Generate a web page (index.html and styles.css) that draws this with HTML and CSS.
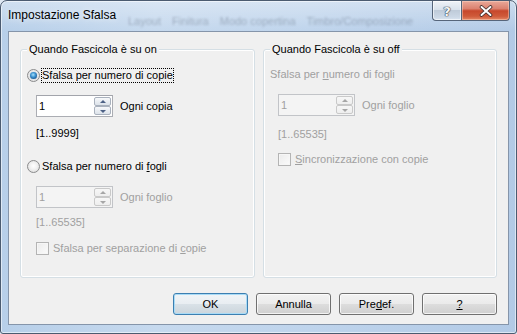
FILE: index.html
```html
<!DOCTYPE html>
<html lang="it">
<head>
<meta charset="utf-8">
<title>Impostazione Sfalsa</title>
<link rel="stylesheet" href="styles.css">
</head>
<body>
<div class="window">
  <div class="titlebar">
    <span class="title">Impostazione Sfalsa</span>
    <div class="ghost"><span>Layout</span><span>Finitura</span><span>Modo copertina</span><span>Timbro/Composizione</span></div>
    <div class="caption">
      <div class="cap help">?</div>
      <div class="cap close">
        <svg width="14" height="12" viewBox="0 0 14 12">
          <path d="M2.5 2 L11.5 10 M11.5 2 L2.5 10" stroke="#3a2a2a" stroke-width="3.6" stroke-linecap="round"/>
          <path d="M2.5 2 L11.5 10 M11.5 2 L2.5 10" stroke="#ffffff" stroke-width="2" stroke-linecap="round"/>
        </svg>
      </div>
    </div>
  </div>
  <div class="client">
    <div class="groups">
      <div class="group g-left">
        <span class="legend">Quando Fascicola è su on</span>
        <div class="opt opt-first">
          <span class="radio on"></span><span class="lbl focus">Sfalsa per numero di copie</span>
        </div>
        <div class="spinrow r1">
          <div class="spin"><span class="val">1</span><div class="arrows"><span class="arr up"></span><span class="arr down"></span></div></div>
          <span class="cap-txt">Ogni copia</span>
        </div>
        <div class="range r1b">[1..9999]</div>
        <div class="opt opt-second">
          <span class="radio"></span><span class="lbl">Sfalsa per numero di <u>f</u>ogli</span>
        </div>
        <div class="spinrow r2 dis">
          <div class="spin"><span class="val">1</span><div class="arrows"><span class="arr up"></span><span class="arr down"></span></div></div>
          <span class="cap-txt">Ogni foglio</span>
        </div>
        <div class="range r2b dis">[1..65535]</div>
        <div class="chk-row c1 dis">
          <span class="check"></span><span class="lbl">Sfalsa per separazione di <u>c</u>opie</span>
        </div>
      </div>
      <div class="group g-right">
        <span class="legend">Quando Fascicola è su off</span>
        <div class="plain dis">Sfalsa per <u>n</u>umero di fogli</div>
        <div class="spinrow r3 dis">
          <div class="spin"><span class="val">1</span><div class="arrows"><span class="arr up"></span><span class="arr down"></span></div></div>
          <span class="cap-txt">Ogni foglio</span>
        </div>
        <div class="range r3b dis">[1..65535]</div>
        <div class="chk-row c2 dis">
          <span class="check"></span><span class="lbl"><u>S</u>incronizzazione con copie</span>
        </div>
      </div>
    </div>
    <div class="buttons">
      <button class="btn default">OK</button>
      <button class="btn">Annulla</button>
      <button class="btn">Pre<u>d</u>ef.</button>
      <button class="btn"><u>?</u></button>
    </div>
  </div>
</div>
</body>
</html>
```

FILE: styles.css
```css
* { box-sizing: border-box; }
html, body { margin: 0; padding: 0; }
body {
  width: 517px;
  height: 334px;
  overflow: hidden;
  background: #dfe8f3;
  font-family: "Liberation Sans", Arial, sans-serif;
  font-size: 11px;
  color: #000;
}
.window {
  width: 517px;
  height: 334px;
  border: 1px solid #4b5b70;
  border-radius: 7px 7px 3px 3px;
  background:
    linear-gradient(180deg, rgba(255,255,255,0.35) 0%, rgba(255,255,255,0) 30px),
    linear-gradient(90deg, #b7cfe9 0%, #c6d9ee 30%, #bfd4ec 60%, #b2cae6 100%);
  display: flex;
  flex-direction: column;
  box-shadow: inset 0 0 0 1px rgba(255,255,255,0.55);
}
.titlebar {
  height: 30px;
  position: relative;
  display: flex;
  align-items: flex-start;
  padding-left: 7px;
}
.title {
  font-size: 12px;
  line-height: 15px;
  padding-top: 7px;
  color: #000;
  position: relative;
  z-index: 1;
  text-shadow: 0 0 6px rgba(255,255,255,0.9);
}
.ghost {
  position: absolute;
  left: 127px;
  top: 14px;
  display: flex;
  gap: 11px;
  font-size: 11px;
  color: rgba(40,50,70,0.28);
  filter: blur(1.2px);
  white-space: nowrap;
}
.caption {
  margin-left: auto;
  margin-right: 6px;
  display: flex;
  position: relative;
  z-index: 2;
}
.cap {
  height: 20px;
  border: 1px solid #56657a;
  border-top: none;
  display: flex;
  align-items: center;
  justify-content: center;
}
.help {
  width: 29px;
  border-right: none;
  border-radius: 0 0 0 4px;
  background: linear-gradient(180deg, #eef2f7 0%, #d9e2ec 45%, #bfcbd9 50%, #ccd8e6 85%, #dce6f1 100%);
  box-shadow: inset 0 0 0 1px rgba(255,255,255,0.6);
  font-family: "DejaVu Sans", sans-serif;
  font-weight: bold;
  font-size: 13px;
  color: #f4f6f8;
  text-shadow: 0 0 1px #2d3a4a, 0 0 1px #2d3a4a, 0 0 1px #2d3a4a;
  padding-top: 1px;
}
.close {
  width: 49px;
  border-radius: 0 0 4px 0;
  background: linear-gradient(180deg, #eaa99a 0%, #dc8270 40%, #c7482c 52%, #cf5a3a 80%, #e48766 100%);
  box-shadow: inset 0 0 0 1px rgba(255,220,200,0.45);
}
.client {
  flex: 1;
  margin: 0 7px 8px 7px;
  background: #f0f0f0;
  border: 1px solid #8595aa;
  display: flex;
  flex-direction: column;
}
.groups {
  display: flex;
  gap: 8px;
  padding: 17px 11px 0 11px;
}
.group {
  position: relative;
  height: 229px;
  border: 1px solid #d5dfe5;
  border-radius: 3px;
  box-shadow: inset 0 0 0 1px #fff;
  display: flex;
  flex-direction: column;
  align-items: flex-start;
  padding-left: 6px;
}
.g-left { width: 235px; }
.g-right { width: 234px; }
.legend {
  position: absolute;
  top: -7px;
  left: 6px;
  padding: 0 2px;
  line-height: 13px;
  background: #f0f0f0;
  color: #000;
}
.dis, .dis .lbl, .dis .cap-txt { color: #a0a0a0; }
.opt {
  display: flex;
  align-items: center;
  height: 15px;
}
.opt-first { margin-top: 18px; }
.opt-second { margin-top: 19px; }
.radio {
  width: 13px;
  height: 13px;
  border-radius: 50%;
  border: 1px solid #8a8b8c;
  background: radial-gradient(circle at 50% 45%, #ffffff 0%, #f2f2f2 40%, #d6d6d6 100%);
  position: relative;
  flex: none;
}
.radio.on::after {
  content: "";
  position: absolute;
  left: 2px;
  top: 2px;
  width: 7px;
  height: 7px;
  border-radius: 50%;
  background: radial-gradient(circle at 45% 40%, #a9e1fb 0%, #3f95d2 40%, #1a5b97 75%, #113f6d 100%);
  box-shadow: 0 0 1px rgba(30,90,150,0.6);
}
.lbl {
  line-height: 13px;
  border: 1px solid transparent;
  margin-left: 1px;
}
.lbl.focus { border: 1px dotted #000; }
.spinrow {
  display: flex;
  align-items: center;
  margin-left: 9px;
  gap: 7px;
}
.r1, .r2 { margin-top: 12px; }
.r3 { margin-top: 13px; margin-left: 8px; }
.spin {
  width: 77px;
  height: 22px;
  border: 1px solid #abadb3;
  border-top-color: #a2a4ab;
  background: #fff;
  padding: 1px;
  display: flex;
}
.dis .spin {
  border-color: #c2c4c8;
  background: #f4f4f4;
}
.val {
  flex: 1;
  line-height: 18px;
  padding-left: 1px;
  color: #000;
}
.dis .val { color: #a0a0a0; }
.arrows {
  width: 17px;
  display: flex;
  flex-direction: column;
}
.arr {
  flex: 1;
  border: 1px solid #a9b1bd;
  border-radius: 2px;
  background: linear-gradient(180deg, #f8f9fb 0%, #e9edf2 50%, #dde3ea 100%);
  position: relative;
}
.dis .arr {
  border-color: #c9c9c9;
  background: linear-gradient(180deg, #f7f7f7 0%, #eeeeee 100%);
}
.arr::after {
  content: "";
  position: absolute;
  left: 5px;
  width: 0;
  height: 0;
  border-left: 3px solid transparent;
  border-right: 3px solid transparent;
}
.up::after { top: 2px; border-bottom: 3px solid #4d6185; }
.down::after { top: 3px; border-top: 3px solid #4d6185; }
.dis .up::after { border-bottom-color: #a6a6a6; }
.dis .down::after { border-top-color: #a6a6a6; }
.cap-txt { line-height: 13px; }
.range {
  line-height: 13px;
  margin-left: 9px;
}
.r1b { margin-top: 10px; }
.r2b { margin-top: 8px; }
.r3b { margin-top: 12px; margin-left: 8px; }
.plain {
  line-height: 13px;
  margin-top: 18px;
  margin-left: 0;
}
.chk-row {
  display: flex;
  align-items: center;
  gap: 2px;
  margin-left: 9px;
}
.c1 { margin-top: 12px; }
.c2 { margin-top: 11px; margin-left: 8px; }
.check {
  width: 13px;
  height: 13px;
  border: 1px solid #b4b4b4;
  background: linear-gradient(135deg, #ebebeb 0%, #fbfbfb 100%);
  box-shadow: inset 0 0 0 1px #f6f6f6;
  flex: none;
}
.buttons {
  display: flex;
  justify-content: flex-end;
  gap: 8px;
  margin-top: 15px;
  padding-right: 11px;
}
.btn {
  width: 75px;
  height: 22px;
  padding: 0;
  font-family: "Liberation Sans", Arial, sans-serif;
  font-size: 11px;
  color: #000;
  border: 1px solid #707070;
  border-radius: 3px;
  background: linear-gradient(180deg, #f2f2f2 0%, #ebebeb 48%, #dddddd 52%, #cfcfcf 100%);
  box-shadow: inset 0 0 0 1px rgba(255,255,255,0.75);
}
.btn.default {
  border-color: #3c7fb1;
  box-shadow: inset 0 0 0 1px #a9dbf6;
  background: linear-gradient(180deg, #f0f4f7 0%, #e9eef2 48%, #d9e1e7 52%, #cbd5dc 100%);
}
```
